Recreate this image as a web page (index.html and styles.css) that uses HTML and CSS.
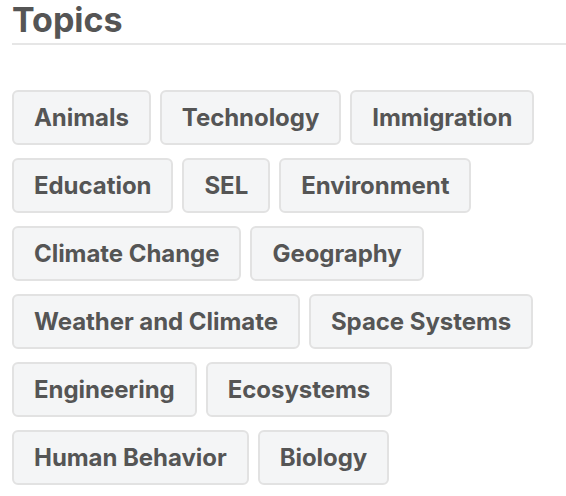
FILE: index.html
```html
<!DOCTYPE html>
<html lang="en">
<head>
    <meta charset="UTF-8">
    <meta name="viewport" content="width=device-width, initial-scale=1.0">
    <title>Topics</title>
    <link rel="stylesheet" href="styles.css">
</head>
<body>
    <section class="topics">
        <h2 class="topics-title">Topics</h2>
        <div class="tag-list">
            <a class="tag" href="#">Animals</a>
            <a class="tag" href="#">Technology</a>
            <a class="tag" href="#">Immigration</a>
            <a class="tag" href="#">Education</a>
            <a class="tag" href="#">SEL</a>
            <a class="tag" href="#">Environment</a>
            <a class="tag" href="#">Climate Change</a>
            <a class="tag" href="#">Geography</a>
            <a class="tag" href="#">Weather and Climate</a>
            <a class="tag" href="#">Space Systems</a>
            <a class="tag" href="#">Engineering</a>
            <a class="tag" href="#">Ecosystems</a>
            <a class="tag" href="#">Human Behavior</a>
            <a class="tag" href="#">Biology</a>
        </div>
    </section>
</body>
</html>
```

FILE: styles.css
```css
*{
    margin: 0;
    padding: 0;
    box-sizing: border-box;
    font-family: Inter, 'Liberation Sans', Arial, sans-serif;
}
body{
    background: #fff;
    padding: 0 0 0 12px;
}
.topics-title{
    font-size: 34px;
    font-weight: 700;
    color: #555;
    line-height: 40px;
    padding-bottom: 3px;
    border-bottom: 2px solid #e6e6e6;
}
.tag-list{
    display: flex;
    flex-wrap: wrap;
    gap: 13px 9px;
    margin-top: 45px;
    padding-right: 20px;
}
.tag{
    display: inline-block;
    height: 55px;
    line-height: 51px;
    padding: 0 20px;
    font-size: 24px;
    font-weight: 700;
    letter-spacing: -0.05px;
    color: #555;
    text-decoration: none;
    background: #f4f5f6;
    border: 2px solid #e2e2e2;
    border-radius: 6px;
}
```
